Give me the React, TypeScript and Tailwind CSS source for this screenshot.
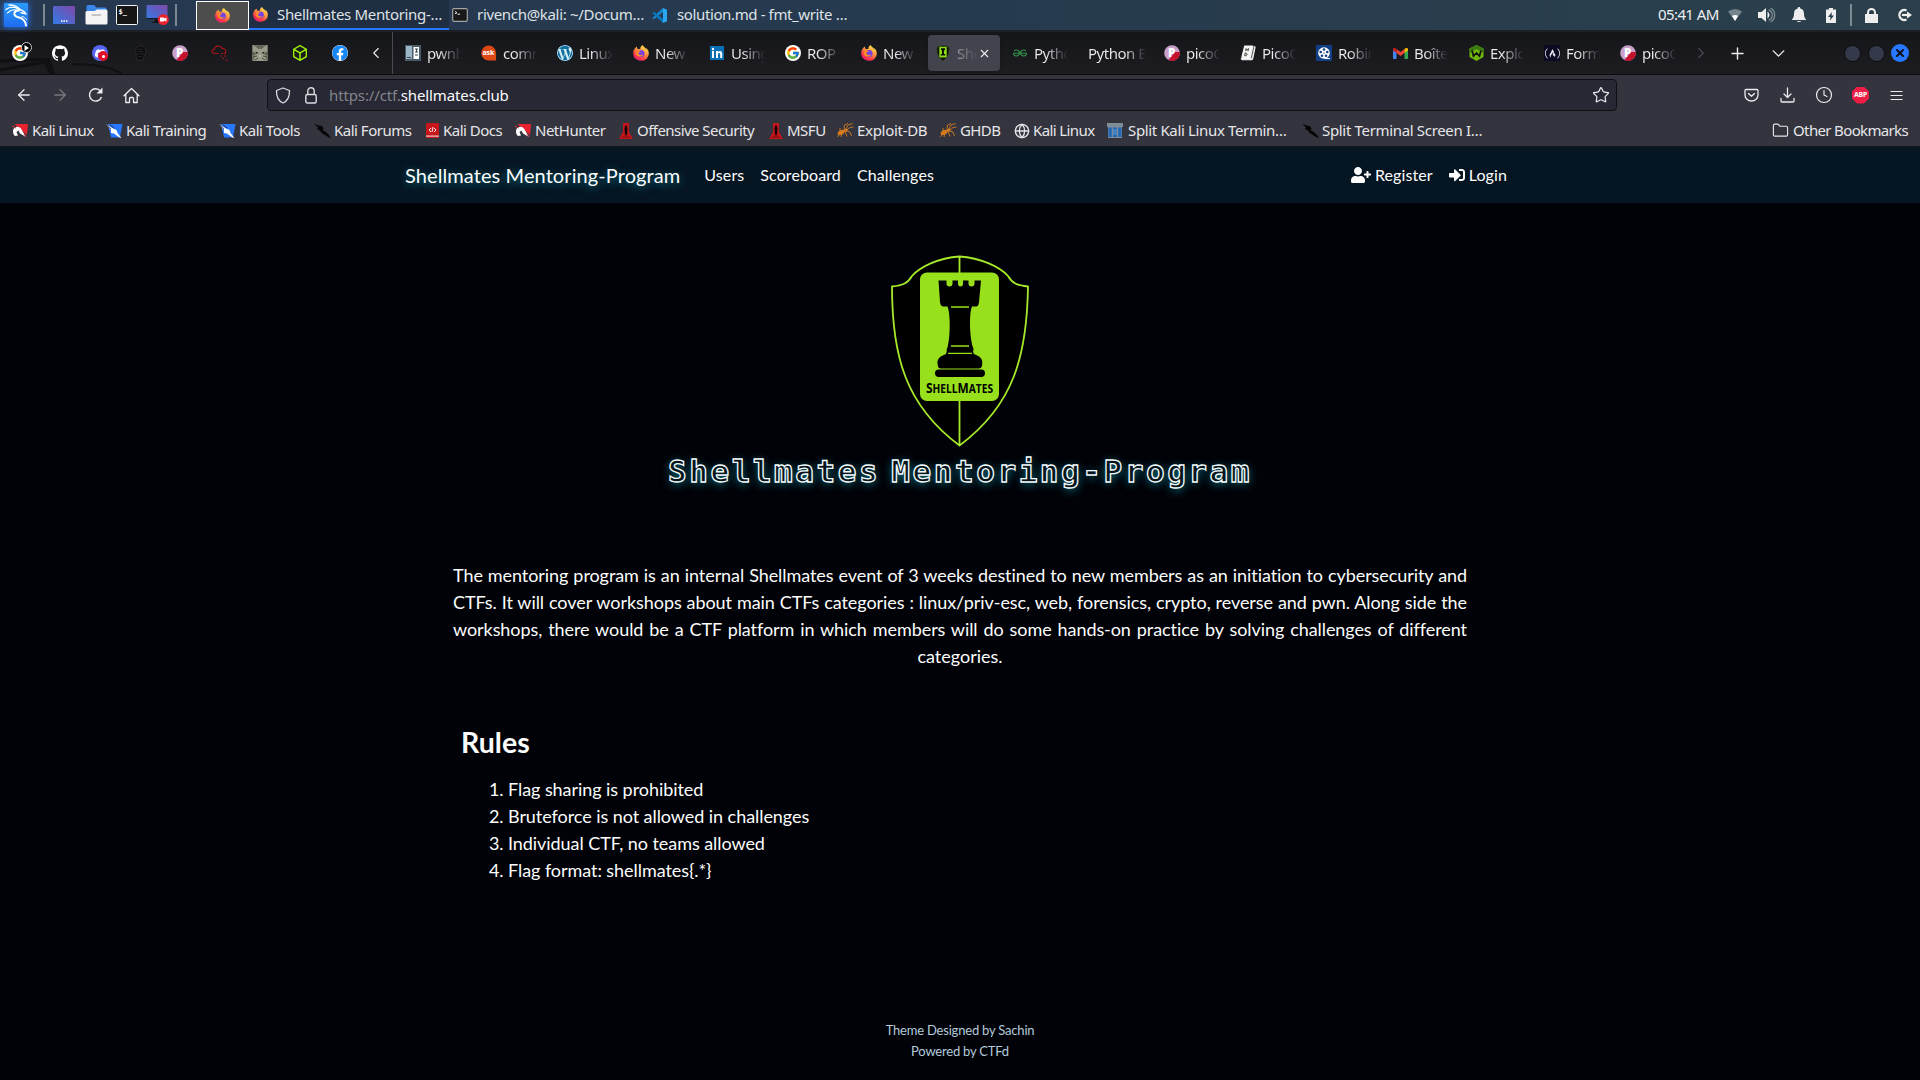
import React from "react";
import { FcGoogle } from "react-icons/fc";
import { SiHackthebox, SiGeeksforgeeks, SiFreecodecamp, SiDiscord, SiGithub, SiWordpress } from "react-icons/si";
import { FaFacebook, FaSignInAlt, FaUserPlus } from "react-icons/fa";
import { ArrowLeft, ArrowRight, Plus, ChevronDown, ChevronLeft, ChevronRight, X, Clock, Folder, Globe, Star } from "lucide-react";

type P = { s?: number };

const Firefox = ({ s = 16 }: P) => (
  <svg width={s} height={s} viewBox="0 0 16 16">
    <defs>
      <linearGradient id="fx" x1="0.8" y1="0" x2="0.2" y2="1">
        <stop offset="0" stopColor="#fff44f" />
        <stop offset="0.4" stopColor="#ff9640" />
        <stop offset="0.75" stopColor="#ff3647" />
        <stop offset="1" stopColor="#e31587" />
      </linearGradient>
    </defs>
    <path d="M15.2 5.6C14.7 4.4 13.6 3.1 12.8 2.7c.5 1 .8 1.9.9 2.5C12.400 2.100 10.200 1.800 9.500 0C7.700 1 7.200 2.900 7.300 4L5 4.100C4 3.300 3.800 2.200 4 1.500C2.900 2 1.800 3.300 1.300 4.200C.2 6 .1 7.500.2 8.800A7.800 7.200 0 0 0 15.800 8.500c0-1-.2-2-.6-2.900z" fill="url(#fx)" />
    <circle cx="8" cy="8.400" r="3.500" fill="#7542e5" />
    <path d="M3 6.500c2-1.500 4.200-1 5 .2-1.500 0-2.200.7-2.700 1.300.2 2 3 2.800 5 1.300-.8 2.700-6 3.500-7.500-.3z" fill="#ff8a2a" />
  </svg>
);

const Dragon = () => (
  <svg width="28" height="28" viewBox="0 0 28 28" className="drop-shadow-[0_0_3px_#2777ff]">
    <defs>
      <linearGradient id="kd" x1="0" y1="0" x2="0" y2="1">
        <stop offset="0" stopColor="#2b9af5" />
        <stop offset="1" stopColor="#1f6cf0" />
      </linearGradient>
    </defs>
    <rect x="2" y="2" width="24" height="24" rx="1" fill="url(#kd)" />
    <g fill="none" stroke="#fff" strokeLinecap="round">
      <path d="M4 8.500C8 5.500 12 5 17 8.500" strokeWidth="1.400" />
      <path d="M5.500 12C8.500 9 12 8 16 9.500" strokeWidth="1.100" />
      <path d="M7 4c5 0 9 2 11 4.500l4 2 1.500 2.200-4.500-1" strokeWidth="1.500" />
      <path d="M17 9.500c-5-.5-6.500 5-1.500 6.500 5 1 8 3 8.500 8.500" strokeWidth="2" />
      <path d="M20 15.500c2 .5 3.500 1 4.500 3" strokeWidth="1" />
    </g>
  </svg>
);

const Desktop = () => (
  <svg width="22" height="18" viewBox="0 0 22 18">
    <defs>
      <linearGradient id="dk" x1="0" y1="1" x2="1" y2="0">
        <stop offset="0.1" stopColor="#3a76e0" />
        <stop offset="1" stopColor="#7f48a8" />
      </linearGradient>
    </defs>
    <rect width="22" height="18" rx="1" fill="url(#dk)" />
    <path d="M8 15h1.500M10.500 15H12M13 15h1.500" stroke="#fff" strokeWidth="1.300" />
  </svg>
);

const Files = () => (
  <svg width="23" height="20" viewBox="0 0 23 20">
    <path d="M1.500 1.500Q1.500 0 3 0h6l2.500 2.500H20q1.500 0 1.500 1.500v5h-20z" fill="#3a86e8" />
    <path d="M0.500 7.500Q.5 6 2 6h7.500L12 4.500h9q1.500 0 1.500 1.500v12q0 1.500-1.500 1.500H2Q.5 19.500.5 18z" fill="#f4f4f4" />
    <rect x="6.500" y="9" width="10" height="2" rx="1" fill="#c4c4c4" />
  </svg>
);

const Term = () => (
  <svg width="22" height="20" viewBox="0 0 22 20">
    <rect x="0.500" y="0.500" width="21" height="19" rx="1" fill="#161616" stroke="#f2f2f2" />
    <text x="2.500" y="9" fontSize="7" fontWeight="700" fill="#fff" fontFamily="DejaVu Sans Mono, monospace">$_</text>
  </svg>
);

const Recorder = () => (
  <svg width="23" height="20" viewBox="0 0 23 20">
    <rect x="0.500" width="21" height="14.500" rx="1" fill="url(#dk)" />
    <path d="M0.500 13h21v1.500h-21z" fill="#15161a" />
    <path d="M6 17.500h9M9 15h4v2H9z" stroke="#15161a" />
    <circle cx="17.300" cy="14.500" r="5.500" fill="#e8222e" />
    <path d="M14 12.500h4v1l2.500-1v4l-2.500-1v1h-4z" fill="#fff" />
  </svg>
);

const MiniTerm = () => (
  <svg width="16" height="14" viewBox="0 0 16 14">
    <rect x="0.700" y="0.700" width="14.600" height="12.600" rx="1.300" fill="#191919" stroke="#a2a6a6" strokeWidth="1.200" />
    <path d="M3 3.500l2 1.200-2 1.200M5.500 6.200h2.500" stroke="#eee" fill="none" />
  </svg>
);

const VsCode = () => (
  <svg width="15" height="15" viewBox="0 0 15 15">
    <path d="M11 0l4 1.800v11.400L11 15z" fill="#2aa7f2" />
    <path d="M11 0v4L2 11.300.3 10z" fill="#1486cf" />
    <path d="M11 15v-4L2 3.700.3 5z" fill="#0d76bd" />
  </svg>
);

const Pico = () => (
  <svg width="16" height="16" viewBox="0 0 16 16">
    <circle cx="8" cy="8" r="7.800" fill="#c9a0cb" />
    <path d="M15.800 7A7.800 7.800 0 0 1 4.500 15L7 12 11 7z" fill="#c4122f" />
    <text x="4" y="12" fontSize="11.500" fontWeight="800" fill="#fff" fontFamily="Open Sans, sans-serif">P</text>
  </svg>
);

const GoogleDisc = () => (
  <span className="flex size-4 items-center justify-center rounded-full bg-white">
    <FcGoogle size={14} />
  </span>
);

const Spiral = () => (
  <svg width="16" height="16" viewBox="0 0 16 16" fill="none" stroke="#313134" strokeWidth="0.700">
    <path d="M4 8C3 4 5 1.500 8.500 1.200S14 4 13.500 7 11 11 11 15H5.500C5.500 12 4 11.500 4 8z" fill="#0c0c0e" />
    <path d="M5.500 6.500h6M5 9h7M6 4.200h5M6.500 11.500h3.500" />
  </svg>
);

const Cat = () => (
  <svg width="16" height="16" viewBox="0 0 16 16">
    <rect width="16" height="16" fill="#6f7062" />
    <path d="M1 0l4 3 2-1h2l2 1 4-3v6l-2 3 1 7H2l1-7-2-3z" fill="#9a9a88" />
    <path d="M6 1l.5 3M8 1v3M10 1l-.5 3M0 8l4 1M16 8l-4 1M1 12l4-1M15 12l-4-1M3 15l3-2M13 15l-3-2" stroke="#45463d" strokeWidth="0.900" />
    <path d="M3.500 6.500l3 1.500-2.500.7zM12.500 6.500l-3 1.500 2.500.7z" fill="#15181a" />
    <path d="M6.500 10.500h3L8 12z" fill="#d8c9bd" />
  </svg>
);

const Pwnable = () => (
  <svg width="16" height="16" viewBox="0 0 16 16">
    <rect width="16" height="16" fill="#4a5a66" />
    <rect x="1" y="1" width="6" height="13" fill="#9bb6c6" />
    <path d="M8.500 2h5.500v12H8.500z" fill="#fff" />
    <path d="M10 4h3M10 7h3M10 10h3M11.500 4v3M2 12.500h4" stroke="#33424d" />
  </svg>
);

const Ask = () => (
  <svg width="17" height="16" viewBox="0 0 17 16">
    <path d="M8.200 0a8 8 0 1 0 0 16H16V8a8 8 0 0 0-7.800-8z" fill="#dd4814" />
    <text x="1.600" y="10.500" fontSize="7.500" fontWeight="700" fill="#fff" textLength="12.500" fontFamily="Open Sans, sans-serif">ask</text>
  </svg>
);

const LinkedIn = () => (
  <svg width="14" height="14" viewBox="0 0 14 14">
    <rect width="14" height="14" fill="#0a70b5" />
    <rect x="2" y="5" width="2" height="7" fill="#fff" />
    <circle cx="3" cy="3" r="1.200" fill="#fff" />
    <path d="M6 12V5h2v1c1.500-2 4.200-1.200 4.200 1.500V12h-2V8.500c0-2-2.200-2-2.200 0V12z" fill="#fff" />
  </svg>
);

const Shield = () => (
  <svg width="14" height="16" viewBox="0 0 14 16">
    <path d="M1 2.500L7 .5l6 2c0 6-1.500 10-6 13-4.500-3-6-7-6-13z" fill="#0b1205" stroke="#26360c" />
    <rect x="3.300" y="1.800" width="7.400" height="10.700" rx="1" fill="#8edb1c" />
    <path d="M5 3.200h4v2H8V9h1.200v1.500H4.800V9H6V5.200H5z" fill="#0a0f02" />
  </svg>
);

const Book = () => (
  <svg width="17" height="16" viewBox="0 0 17 16">
    <path d="M5 .5h8.500L11 12.500H2z M14.500 1l1.500.7-2.500 12.300-1 1.200H2.500L1 13.800" fill="#f4f4f4" stroke="#f4f4f4" strokeWidth="1.200" strokeLinejoin="round" />
    <path d="M12 13.500L14.700 1.500" stroke="#222" strokeWidth="0.800" />
    <path d="M6.500 3l-.5 3M9 3l-.5 3M6.400 4.500h2.200M5.500 8L5 11M5.500 8c3 0 2.500 3-.5 3" stroke="#333" fill="none" />
  </svg>
);

const Reel = () => (
  <svg width="16" height="16" viewBox="0 0 16 16">
    <rect width="16" height="16" rx="1" fill="#123f86" />
    <circle cx="8" cy="8" r="5.800" fill="#fff" />
    <path d="M9 13.500h5" stroke="#fff" />
    <g fill="#123f86">
      <circle cx="8" cy="4.500" r="1.300" /><circle cx="4.700" cy="7" r="1.300" /><circle cx="11.300" cy="7" r="1.300" />
      <circle cx="6" cy="10.800" r="1.300" /><circle cx="10" cy="10.800" r="1.300" /><circle cx="8" cy="8" r="0.700" />
    </g>
  </svg>
);

const Gmail = () => (
  <svg width="15" height="11" viewBox="0 0 15 11">
    <path d="M0 1.500V10q0 1 1 1h2.500V4z" fill="#4285f4" />
    <path d="M11.500 4v7H14q1 0 1-1V1.500z" fill="#34a853" />
    <path d="M3.500 1v4l4 3 4-3V1l-4 3z" fill="#ea4335" />
    <path d="M0 1.500C0 0 1.700-.4 2.700.4l.8.600v4L0 2.500z" fill="#c5221f" />
    <path d="M15 1.500c0-1.500-1.700-1.900-2.700-1.100l-.8.600v4L15 2.500z" fill="#fbbc04" />
  </svg>
);

const WHex = () => (
  <svg width="15" height="16" viewBox="0 0 15 16">
    <path d="M7.500 0L14.500 3.500V12L7.500 16 .5 12V3.500z" fill="#70b70c" />
    <path d="M7.500 0L14.500 3.500V8L7.500 4 .5 8V3.500z" fill="#3d7a12" />
    <path d="M3 5.500l1.500 5.500L7.500 8l3 3L12 5.500" stroke="#111" strokeWidth="1.700" fill="none" />
  </svg>
);

const CloudRed = () => (
  <svg width="18" height="16" viewBox="0 0 18 16" fill="none" stroke="#9c161c" strokeWidth="1.200">
    <path d="M8 8.500H3.500C.5 8.500.3 4.500 3.500 4.200 4 .3 10 0 11 3.500c4-.5 5 4.500 2 5" />
    <path d="M10 8.500h5M9 11h3M13 11h3M11 13.500h2M14.500 15.200h2" strokeDasharray="2.500 0.800" />
  </svg>
);

const Discord = () => (
  <span className="relative flex size-4 items-center justify-center rounded-full bg-[#5865f2]">
    <SiDiscord size={11} color="#fff" />
    <span className="absolute right-0 bottom-0 flex size-[10px] items-center justify-center rounded-full bg-[#e0102a]">
      <span className="size-[3px] rounded-full bg-white" />
    </span>
  </span>
);

const GooglePlay = () => (
  <span className="relative">
    <GoogleDisc />
    <span className="absolute -top-[3px] -right-[4px] flex size-[11px] items-center justify-center rounded-full border border-[#cfcfd3] bg-black">
      <svg width="5" height="6" viewBox="0 0 5 6"><path d="M0.500 0L5 3 .5 6z" fill="#fff" /></svg>
    </span>
  </span>
);

/* bookmark icons */
const BlueMark = () => (
  <svg width="17" height="16" viewBox="0 0 17 16">
    <path d="M2 1h14.500L14 14.500H5z" fill="#2777ff" />
    <path d="M0 1l7 4.500 3.500 1.500 1 3 4 5-2.500-.8-5-3.700-3-.5L5 7z" fill="#fff" />
    <path d="M1 1.500l4 4.500M4 2l4 3" stroke="#15161a" strokeWidth="0.700" />
  </svg>
);
const RedMark = () => (
  <svg width="17" height="16" viewBox="0 0 17 16">
    <path d="M2.500 1H16l-1 11-5-4z" fill="#e8232f" />
    <path d="M1 8c0-5 7-6 8.500-1.500L14 14 8 10.500 6.500 7.500 4.500 9 6 12.500 3 13C1.500 12 1 10 1 8z" fill="#fff" />
    <path d="M0 3l4 2M12 11l2 3" stroke="#d9343c" strokeWidth="1" />
  </svg>
);
const Docs = () => (
  <svg width="13" height="15" viewBox="0 0 13 15">
    <rect width="13" height="15" rx="1" fill="#c8161d" />
    <rect y="12.500" width="13" height="1.200" fill="#ebc9c9" />
    <path d="M5 5L3 7l2 2M8 5l2 2-2 2M7 4l-1 5" stroke="#fff" fill="none" strokeWidth="0.900" />
  </svg>
);
const Offsec = () => (
  <svg width="14" height="16" viewBox="0 0 14 16">
    <path d="M4 0h6v9l4 7H0l4-7z" fill="#c5161c" />
    <path d="M7 1.500L8.500 5 8 12H6l-.5-7z" fill="#12060a" />
    <path d="M1.500 15L7 11.500 12.500 15z" fill="#9d0f15" />
  </svg>
);
const Ant = () => (
  <svg width="17" height="15" viewBox="0 0 17 15" stroke="#d57a1f" fill="#d57a1f">
    <ellipse cx="4" cy="9.500" rx="3.500" ry="2.300" transform="rotate(-25 4 9.500)" stroke="none" />
    <ellipse cx="8.500" cy="7.200" rx="2.400" ry="1.500" transform="rotate(-20 8.500 7.200)" stroke="none" />
    <path d="M7 6L7.500 2 11 .5M9 6l2-4 4.500-1.500M10 7l3-2.500 3.500-.5M9 8l4 1 1.500 4M8 8.500l2 5M5 10l-1 4M2 11l-1.500 3M3 8V5" fill="none" strokeWidth="0.900" />
  </svg>
);
const Columns = () => (
  <svg width="16" height="15" viewBox="0 0 16 15">
    <path d="M0 0h16v4h-1v11H1V4H0z" fill="#7e8c98" />
    <path d="M1.500 4.500h3.300V14H1.500zM6 4.500h4V14H6zM11.200 4.500h3.300V14h-3.300z" fill="#2169b7" />
    <path d="M7 6v6M9 6v6" stroke="#9fc0e2" strokeWidth="0.600" />
  </svg>
);
const BlackDragon = () => (
  <svg width="17" height="16" viewBox="0 0 17 16">
    <path d="M0 .5l4.500 2L8 3l1.500 2.500-1 1.500 4 2.500L15 12l2 3.500-4.500-2.500-5-3-1-2-3.500-2 1-1.500z" fill="#050506" />
  </svg>
);

type Tab = { icon: React.ReactNode; label: string };
const tabs: Tab[] = [
  { icon: <Pwnable />, label: "pwnbl" },
  { icon: <Ask />, label: "comm" },
  { icon: <SiWordpress size={16} color="#d7edf8" className="rounded-full bg-[#11719f]" />, label: "Linux" },
  { icon: <Firefox />, label: "New T" },
  { icon: <LinkedIn />, label: "Using" },
  { icon: <GoogleDisc />, label: "ROP E" },
  { icon: <Firefox />, label: "New T" },
];
const tabsAfter: Tab[] = [
  { icon: <SiGeeksforgeeks size={14} color="#2f8d46" />, label: "Pytho" },
  { icon: null, label: "Python E" },
  { icon: <Pico />, label: "picoC" },
  { icon: <Book />, label: "PicoC" },
  { icon: <Reel />, label: "Robin" },
  { icon: <Gmail />, label: "Boîte" },
  { icon: <WHex />, label: "Explo" },
  { icon: <span className="flex size-4 items-center justify-center bg-[#0a0a23]"><SiFreecodecamp size={15} color="#e9e9f2" /></span>, label: "Form" },
  { icon: <Pico />, label: "picoC" },
];

const TabItem = ({ icon, label }: Tab) => (
  <div className="flex h-full w-[76px] shrink-0 items-center pl-3">
    {icon && <span className="mr-[6px] flex w-4 shrink-0 justify-center">{icon}</span>}
    <span className={(icon ? "w-[34px] from-35%" : "w-[58px] from-65%") + " overflow-hidden bg-linear-to-r from-[#ececf0] to-[#1b1b20] to-100% bg-clip-text tracking-[-0.5px] whitespace-nowrap text-transparent"}>{label}</span>
  </div>
);

const pins = [
  <GooglePlay />,
  <SiGithub size={16} color="#fff" />,
  <Discord />,
  <Spiral />,
  <Pico />,
  <CloudRed />,
  <Cat />,
  <SiHackthebox size={16} color="#9fef00" />,
  <FaFacebook size={16} color="#1687f5" className="rounded-full bg-white" />,
];

const bookmarks: { icon: React.ReactNode; label: string; w: string }[] = [
  { icon: <RedMark />, label: "Kali Linux", w: "w-[94px] tracking-[-0.6px]" },
  { icon: <BlueMark />, label: "Kali Training", w: "w-[113px] tracking-[-0.5px]" },
  { icon: <BlueMark />, label: "Kali Tools", w: "w-[95px] tracking-[-0.5px]" },
  { icon: <BlackDragon />, label: "Kali Forums", w: "w-[110px] tracking-[-0.5px]" },
  { icon: <Docs />, label: "Kali Docs", w: "w-[91px] tracking-[-0.5px]" },
  { icon: <RedMark />, label: "NetHunter", w: "w-[103px] tracking-[-0.5px]" },
  { icon: <Offsec />, label: "Offensive Security", w: "w-[150px] tracking-[-0.55px]" },
  { icon: <Offsec />, label: "MSFU", w: "w-[69px] tracking-[-0.5px]" },
  { icon: <Ant />, label: "Exploit-DB", w: "w-[103px] tracking-[-0.3px]" },
  { icon: <Ant />, label: "GHDB", w: "w-[74px] tracking-[-0.6px]" },
  { icon: <Globe size={16} strokeWidth={2} />, label: "Kali Linux", w: "w-[93px] tracking-[-0.6px]" },
  { icon: <span className="mr-[2px]"><Columns /></span>, label: "Split Kali Linux Termin…", w: "w-[195px] tracking-[-0.35px]" },
  { icon: <BlackDragon />, label: "Split Terminal Screen I…", w: "w-[200px] tracking-[-0.33px]" },
];

function Panel() {
  return (
    <div className="flex h-[30px] items-center bg-linear-to-r from-[#263850] via-[#263a4f] to-[#2b404b] text-[#dfe3e6]">
      <div className="ml-[2px] w-[41px]"><Dragon /></div>
      <div className="mr-2 h-[22px] w-[2px] bg-[#7d8791]" />
      <div className="flex w-[122px] items-center">
        <span className="w-8"><Desktop /></span>
        <span className="w-[31px]"><Files /></span>
        <span className="w-[30px]"><Term /></span>
        <Recorder />
      </div>
      <div className="mr-[19px] h-[22px] w-[2px] bg-[#7d8791]" />
      <div className="flex h-[29px] w-[53px] items-center justify-center self-end border border-white bg-[#4d4d4d]"><Firefox s={15} /></div>
      <div className="flex h-[30px] w-[200px] items-center border-b-2 border-[#2777ff] bg-[#1f2e42] pl-1">
        <Firefox s={15} />
        <span className="ml-[9px] tracking-[-0.33px] whitespace-nowrap">Shellmates Mentoring-…</span>
      </div>
      <div className="flex w-[200px] items-center pl-[3px]">
        <MiniTerm /><span className="ml-[9px] pb-[2px] tracking-[-0.32px] whitespace-nowrap">rivench@kali: ~/Docum…</span>
      </div>
      <div className="flex items-center pl-[3px]">
        <VsCode /><span className="ml-[10px] pb-[2px] tracking-[-0.38px] whitespace-nowrap">solution.md - fmt_write …</span>
      </div>
      <div className="ml-auto flex items-center text-[#eceff1]">
        <span className="w-[70px] pb-[2px] tracking-[-0.6px] whitespace-nowrap">05:41 AM</span>
        <svg className="mr-[16px]" width="14" height="14" viewBox="0 0 14 14"><path d="M0 3.500Q7-1.500 14 3.500L7 13z" fill="#75848d" /><path d="M4 8Q7 6 10 8L7 13z" fill="#fff" /></svg>
        <svg className="mr-[16px]" width="18" height="16" viewBox="0 0 18 16"><path d="M0 5h3.500L8 1v14l-4.500-4H0z" fill="#eee" /><path d="M9.500 4.500q4 3.500 0 7z" fill="#eee" /><path d="M10.500 2.800c5 1.500 5 9 0 10.400M12.500 1.200C18 3.500 18 12.500 12.500 14.800" stroke="#7e8c93" strokeWidth="1.300" fill="none" /></svg>
        <svg className="mr-[20px]" width="14" height="16" viewBox="0 0 14 16"><path d="M7 0c1 0 1.300.7 1.300 1.500C11 2 12 4 12 7s.8 4 2 5.500V13H0v-.5C1.200 11 2 10 2 7s1-5 3.700-5.500C5.700.7 6 0 7 0zM4.500 14h5q-2.500 2-5 0z" fill="#eee" /></svg>
        <svg className="mr-[14px]" width="10" height="15" viewBox="0 0 10 15"><path d="M3 0h4v1.500h3V15H0V1.500h3z" fill="#eee" /><path d="M6 4L2 9h2.500L4 12.500 8 7.500H5.500z" fill="#2a3e4b" /></svg>
        <div className="mr-[13px] h-[22px] w-[2px] bg-[#7d8b93]" />
        <svg className="mr-[19px]" width="13" height="15" viewBox="0 0 13 15"><path d="M0 6h13v9H0z" fill="#eee" /><path d="M3 7V4.500a3.500 3.500 0 0 1 7 0V7" stroke="#eee" strokeWidth="2" fill="none" /></svg>
        <svg className="mr-[8px]" width="15" height="14" viewBox="0 0 15 14"><path d="M9.500 2.500A5 5 0 1 0 9.500 11.500" stroke="#eee" strokeWidth="2.200" fill="none" /><path d="M5 7h6" stroke="#eee" strokeWidth="2.200" /><path d="M10 3.500L15 7l-5 3.500z" fill="#eee" /></svg>
      </div>
    </div>
  );
}

function TabStrip() {
  return (
    <div className="flex h-[45px] items-center border-y border-t-2 border-t-[#1d2126] border-b-[#0d0d10] bg-linear-to-b from-[#15161a] to-[#1c1c21] text-[#ececf0]">
      <div className="relative flex h-full w-[360px] items-center overflow-hidden">
        <svg className="absolute bottom-0 left-0" width="150" height="16" viewBox="0 0 150 16" fill="none">
          <path d="M0 3L48 1l6 15M0 12l45-8 6 12" stroke="#101013" strokeWidth="3" />
          <path d="M72 6q34 0 50 10" stroke="#111114" strokeWidth="2" />
        </svg>
        {pins.map((p, i) => (
          <span key={i} className="relative flex w-10 shrink-0 justify-center">{p}</span>
        ))}
      </div>
      <div className="flex h-full w-[33px] items-center justify-center border-r border-[#4a4a50]"><ChevronLeft size={18} strokeWidth={1.5} /></div>
      <div className="flex h-full w-[535px] items-center overflow-hidden">
        {tabs.map((t, i) => <TabItem key={i} {...t} />)}
      </div>
      <div className="flex h-9 w-[72px] shrink-0 items-center rounded bg-[#43434d] pl-2 shadow">
        <Shield />
        <span className="ml-[7px] w-[21px] overflow-hidden bg-linear-to-r from-[#9b9ba2] to-[#43434d] bg-clip-text tracking-[-0.5px] whitespace-nowrap text-transparent">She</span>
        <X size={13} strokeWidth={2} />
      </div>
      <div className="flex h-full w-[686px] shrink-0 items-center overflow-hidden">
        {tabsAfter.map((t, i) => <TabItem key={i} {...t} />)}
      </div>
      <div className="flex flex-1 items-center pl-[6px]">
        <ChevronRight size={18} strokeWidth={1.5} color="#4a4a50" />
        <Plus className="ml-[18px]" size={19} strokeWidth={1.8} />
        <ChevronDown className="ml-[21px]" size={21} strokeWidth={1.6} />
        <span className="ml-auto size-[17px] rounded-full border border-[#0c0c0f] bg-[#343a49]" />
        <span className="ml-[7px] size-[17px] rounded-full border border-[#0c0c0f] bg-[#343a49]" />
        <span className="mr-[11px] ml-[6px] flex size-[18px] items-center justify-center rounded-full bg-[#2777ff]"><X size={12} strokeWidth={4} color="#101116" /></span>
      </div>
    </div>
  );
}

function Toolbar() {
  return (
    <div className="flex h-[40px] items-center text-[#ececf0]">
      <div className="flex w-[267px] items-center pl-[15px]">
        <ArrowLeft size={18} strokeWidth={1.7} />
        <ArrowRight className="ml-[18px]" size={18} strokeWidth={1.7} color="#77777e" />
        <svg className="ml-[19px]" width="16" height="16" viewBox="0 0 16 16"><path d="M13.500 10A6.200 6.200 0 1 1 12.500 4" fill="none" stroke="#ececf0" strokeWidth="1.400" /><path d="M14.500 0.500v6h-6z" fill="#ececf0" /></svg>
        <svg className="ml-[19px]" width="17" height="17" viewBox="0 0 17 17" fill="none" stroke="#ececf0" strokeWidth="1.300" strokeLinejoin="round" strokeLinecap="round"><path d="M1 8.800L8.500 1.500 16 8.800M2.800 7.500v8H6.500v-4q0-1 1-1h2q1 0 1 1v4h3.700v-8" /></svg>
      </div>
      <div className="flex h-[32px] w-[1350px] items-center rounded border border-[#0e0e13] bg-[#272833]">
        <svg className="ml-[7px]" width="16" height="17" viewBox="0 0 16 17" fill="none" stroke="#dcdce0" strokeWidth="1.300" strokeLinejoin="round"><path d="M8 1l6.500 2.500C14.700 10 12.500 14 8 16 3.500 14 1.300 10 1.500 3.500z" /></svg>
        <svg className="ml-[14px]" width="12" height="17" viewBox="0 0 12 17" fill="none" stroke="#dcdce0" strokeWidth="1.400"><rect x="0.800" y="7.500" width="10.400" height="8.500" rx="1.500" /><path d="M2.800 7.500V4a3.200 3.200 0 0 1 6.400 0v3.500" /></svg>
        <span className="ml-[12px] pb-px tracking-[-0.12px] text-[#84848c]">https://ctf.<span className="text-[#fbfbfe]">shellmates.club</span></span>
        <Star className="mr-[6px] ml-auto" size={18} strokeWidth={1.6} />
      </div>
      <div className="ml-auto flex items-center pr-[17px]">
        <svg width="15" height="15" viewBox="0 0 15 15" fill="none" stroke="#ececf0" strokeWidth="1.300" strokeLinecap="round" strokeLinejoin="round"><path d="M2 1.500h11q1 0 1 1v4.500a6.500 6 0 0 1-13 0V2.500q0-1 1-1zM4.500 5.500l3 2.800 3-2.800" /></svg>
        <svg className="ml-[21px]" width="15" height="16" viewBox="0 0 15 16" fill="none" stroke="#ececf0" strokeWidth="1.300" strokeLinecap="round" strokeLinejoin="round"><path d="M7.500 1v9.500M4 7l3.500 3.500L11 7M1 11.500V14q0 1 1 1h11q1 0 1-1v-2.500" /></svg>
        <Clock className="ml-[20px]" size={18} strokeWidth={1.600} />
        <span className="ml-[19px] flex size-[17px] items-center justify-center bg-[#ed1e45] text-[7px] font-bold tracking-[-0.2px] text-white [clip-path:polygon(30%_0,70%_0,100%_30%,100%_70%,70%_100%,30%_100%,0_70%,0_30%)]">ABP</span>
        <svg className="ml-[21px]" width="13" height="11" viewBox="0 0 13 11"><path d="M0.500 1.500h12M0.500 5.500h12M0.500 9.500h12" stroke="#ececf0" strokeWidth="1.200" /></svg>
      </div>
    </div>
  );
}

function RookLogo() {
  return (
    <svg width="160" height="200" viewBox="0 0 160 200">
      <path d="M79.500 6.500C58 8 40 17 32 26c-4 7-9 9.500-20 10.500C12 105 25 155 79.500 195.500 134 155 147 105 148 36.500c-11-1-16-3.500-20-10.500C120 17 101 8 79.500 6.500z" fill="#000" stroke="#a6e92a" strokeWidth="1.800" strokeLinejoin="round" />
      <path d="M79.500 6.500v17M79.500 151v44" stroke="#a6e92a" strokeWidth="1.800" />
      <rect x="40" y="22.500" width="79" height="128.500" rx="7" fill="#98e01b" />
      <path d="M58.500 30.500h8v3q0 3 3 3t3-3v-3h5.500v3q0 3 2.500 3t2.500-3v-3h5.500v3q0 3 3 3t3-3v-3h6.500L99 52q-.5 4.500-3 4.500H92c-3 7-2.500 30 1 41 1.500 2.500-1 3 1 6.500 8 3 9 6 8 12q-.5 2-3 2.500H61q-3-.5-3-2.500c-1.500-6 0-9 8-12 1.500-3.500 0-4 1.500-6.500 3-11 3-34 0-41H63.500Q60.500 56.500 60 52z" fill="#000" />
      <rect x="55" y="119.500" width="50" height="7.500" rx="3.700" fill="#000" />
      <path d="M71 57h18M71 96h18M68 103.300h24" stroke="#98e01b" strokeWidth="1.300" />
      <text x="46" y="142.500" textLength="67" lengthAdjust="spacingAndGlyphs" fill="#000" fontFamily="Open Sans, sans-serif" fontWeight="700" fontSize="12"><tspan fontSize="14">S</tspan>HELL<tspan fontSize="14">M</tspan>ATES</text>
    </svg>
  );
}

export default function App() {
  return (
    <div className="flex h-[1080px] w-[1920px] flex-col overflow-hidden bg-[#000207] font-['Noto_Sans',sans-serif] text-[15px] leading-5">
      <Panel />
      <TabStrip />
      <div className="h-[72px] border-b border-[#131417] bg-[#33343d]">
        <Toolbar />
        <div className="flex h-[31px] items-center pl-3 text-[#e6e6ea]">
          {bookmarks.map((b, i) => (
            <div key={i} className={b.w + " flex shrink-0 items-center gap-[3px] whitespace-nowrap"}>
              <span className="flex min-w-[16px] shrink-0 justify-center">{b.icon}</span>
              <span className="pb-[2px]">{b.label}</span>
            </div>
          ))}
          <div className="mr-3 ml-auto flex items-center gap-1 tracking-[-0.65px] whitespace-nowrap"><Folder size={17} strokeWidth={1.600} /><span className="pb-[2px]">Other Bookmarks</span></div>
        </div>
      </div>

      <main className="flex flex-1 flex-col font-[Lato,sans-serif] text-[#fdfdfd]">
        <nav className="h-[56px] bg-[#061522]">
          <div className="mx-auto flex h-full w-[1110px] items-center pb-px text-base tracking-[0.1px]">
            <span className="mr-4 text-xl tracking-[0.09px] [text-shadow:0_2px_10px_#0f7f90]">Shellmates Mentoring-Program</span>
            <span className="p-2">Users</span>
            <span className="p-2">Scoreboard</span>
            <span className="p-2">Challenges</span>
            <span className="ml-auto flex items-center gap-1 p-2"><FaUserPlus size={20} />Register</span>
            <span className="flex items-center gap-1 p-2"><FaSignInAlt size={16} />Login</span>
          </div>
        </nav>

        <section className="flex flex-col items-center pt-[47px]">
          <RookLogo />
          <h1 className="mt-px font-['DejaVu_Sans_Mono',monospace] text-[31px] leading-[40px] font-bold tracking-[2.55px] whitespace-nowrap text-[#06151c] [word-spacing:-10px] [-webkit-text-stroke:1.3px_#f4fcfe] [text-shadow:0_2px_10px_#0f7f90]">Shellmates Mentoring-Program</h1>
        </section>

        <p className="mx-auto mt-[71px] w-[1014px] text-[18px] leading-[27px] tracking-[-0.07px] whitespace-nowrap">
          <span className="block [text-align-last:justify]">The mentoring program is an internal Shellmates event of 3 weeks destined to new members as an initiation to cybersecurity and</span>
          <span className="block tracking-[-0.05px] [text-align-last:justify]">CTFs. It will cover workshops about main CTFs categories : linux/priv-esc, web, forensics, crypto, reverse and pwn. Along side the</span>
          <span className="block [text-align-last:justify]">workshops, there would be a CTF platform in which members will do some hands-on practice by solving challenges of different</span>
          <span className="block text-center tracking-normal">categories.</span>
        </p>

        <section className="mx-auto mt-[55px] w-[998px]">
          <h2 className="text-[28.5px] leading-[34px] font-bold">Rules</h2>
          <ol className="mt-[17px] list-decimal pl-[47px] text-[18px] leading-[27px] tracking-[-0.06px]">
            <li>Flag sharing is prohibited</li>
            <li>Bruteforce is not allowed in challenges</li>
            <li>Individual CTF, no teams allowed</li>
            <li>Flag format: shellmates&#123;.*&#125;</li>
          </ol>
        </section>

        <footer className="mt-auto mb-[18px] text-center text-[13px] leading-[21px] tracking-[-0.2px] text-[#b4cadb]">
          <div>Theme Designed by Sachin</div>
          <div>Powered by CTFd</div>
        </footer>
      </main>
    </div>
  );
}
